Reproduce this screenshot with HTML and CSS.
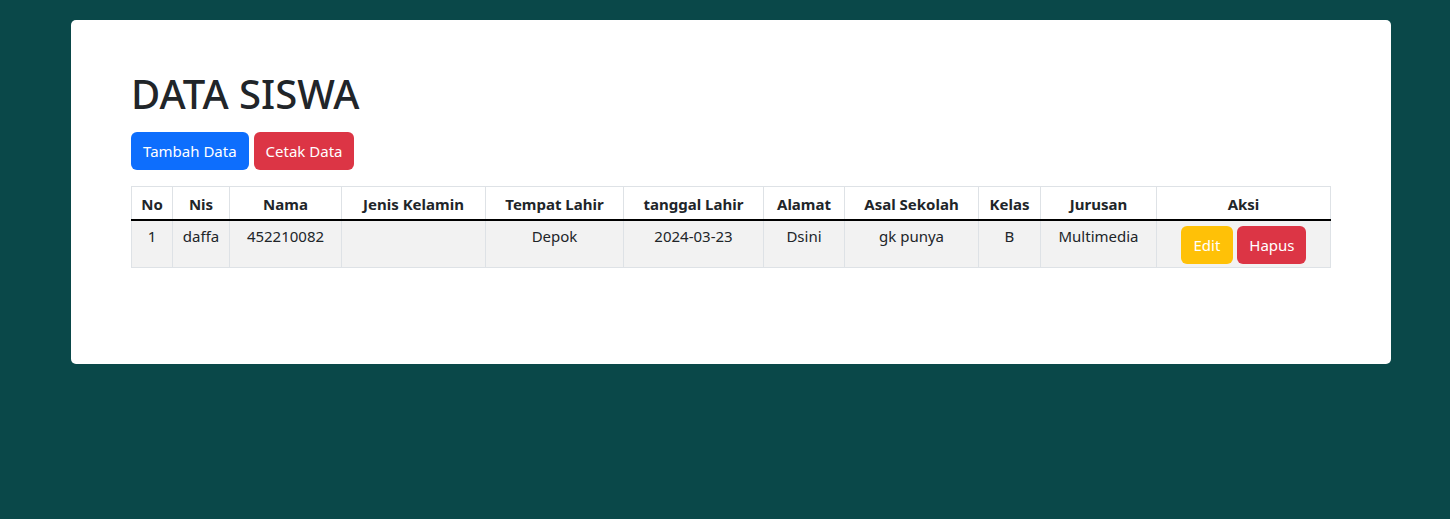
FILE: index.html
```html
<!DOCTYPE html>
<html lang="id">
<head>
	<meta charset="UTF-8">
	<title>Data Siswa</title>
	<meta name="viewport" content="width=device-width, initial-scale=1.0">
	<link rel="stylesheet" href="styles.css">
</head>
<body>
	<div class="container">
		<h1 class="title">DATA SISWA</h1>
		<div class="toolbar">
			<a href="#" class="btn btn-primary">Tambah Data</a>
			<a href="#" class="btn btn-danger">Cetak Data</a>
		</div>

		<table class="data-table">
			<colgroup>
				<col class="col-no">
				<col class="col-nis">
				<col class="col-nama">
				<col class="col-jk">
				<col class="col-tempat">
				<col class="col-tanggal">
				<col class="col-alamat">
				<col class="col-sekolah">
				<col class="col-kelas">
				<col class="col-jurusan">
				<col>
			</colgroup>
			<thead>
				<tr>
					<th>No</th>
					<th>Nis</th>
					<th>Nama</th>
					<th>Jenis Kelamin</th>
					<th>Tempat Lahir</th>
					<th>tanggal Lahir</th>
					<th>Alamat</th>
					<th>Asal Sekolah</th>
					<th>Kelas</th>
					<th>Jurusan</th>
					<th>Aksi</th>
				</tr>
			</thead>
			<tbody>
				<tr>
					<td>1</td>
					<td>daffa</td>
					<td>452210082</td>
					<td></td>
					<td>Depok</td>
					<td>2024-03-23</td>
					<td>Dsini</td>
					<td>gk punya</td>
					<td>B</td>
					<td>Multimedia</td>
					<td class="actions">
						<a href="#" class="btn btn-warning">Edit</a>
						<a href="#" class="btn btn-danger">Hapus</a>
					</td>
				</tr>
			</tbody>
		</table>
	</div>
</body>
</html>
```

FILE: styles.css
```css
body {
	margin: 0;
	background: #0a4849;
	font-family: "Noto Sans", "Open Sans", sans-serif;
	font-size: 15px;
	color: #212529;
}

.container {
	width: 1200px;
	margin: 20px 0 0 71px;
	padding: 50px 60px 96px;
	background: #ffffff;
	border-radius: 5px;
}

.title {
	margin: 0 0 14px;
	font-size: 40px;
	font-weight: 500;
	line-height: 48px;
}

.toolbar {
	display: flex;
	gap: 5px;
	margin-bottom: 16px;
}

.btn {
	display: inline-block;
	padding: 7px 12px;
	border-radius: 6px;
	font-size: 15px;
	line-height: 24px;
	color: #ffffff;
	text-decoration: none;
}

.btn-primary {
	background: #0d6efd;
}

.btn-danger {
	background: #dc3545;
}

.btn-warning {
	background: #ffc107;
}

.actions .btn-warning {
	padding: 7px 13px;
}

/* table */
.data-table {
	width: 100%;
	table-layout: fixed;
	border-collapse: collapse;
	border: 1px solid #dee2e6;
}

.col-no { width: 41px; }
.col-nis { width: 57px; }
.col-nama { width: 112px; }
.col-jk { width: 144px; }
.col-tempat { width: 138px; }
.col-tanggal { width: 140px; }
.col-alamat { width: 81px; }
.col-sekolah { width: 134px; }
.col-kelas { width: 62px; }
.col-jurusan { width: 116px; }

.data-table th,
.data-table td {
	border: 1px solid #dee2e6;
	text-align: center;
	vertical-align: top;
	line-height: 24px;
}

.data-table th {
	padding: 5px 8px 3px;
	font-weight: 700;
	border-bottom: 2px solid #000000;
}

.data-table td {
	background: #f2f2f2;
	padding: 3px 8px 19px;
}

.data-table td.actions {
	padding: 5px 8px 3px;
}
```
